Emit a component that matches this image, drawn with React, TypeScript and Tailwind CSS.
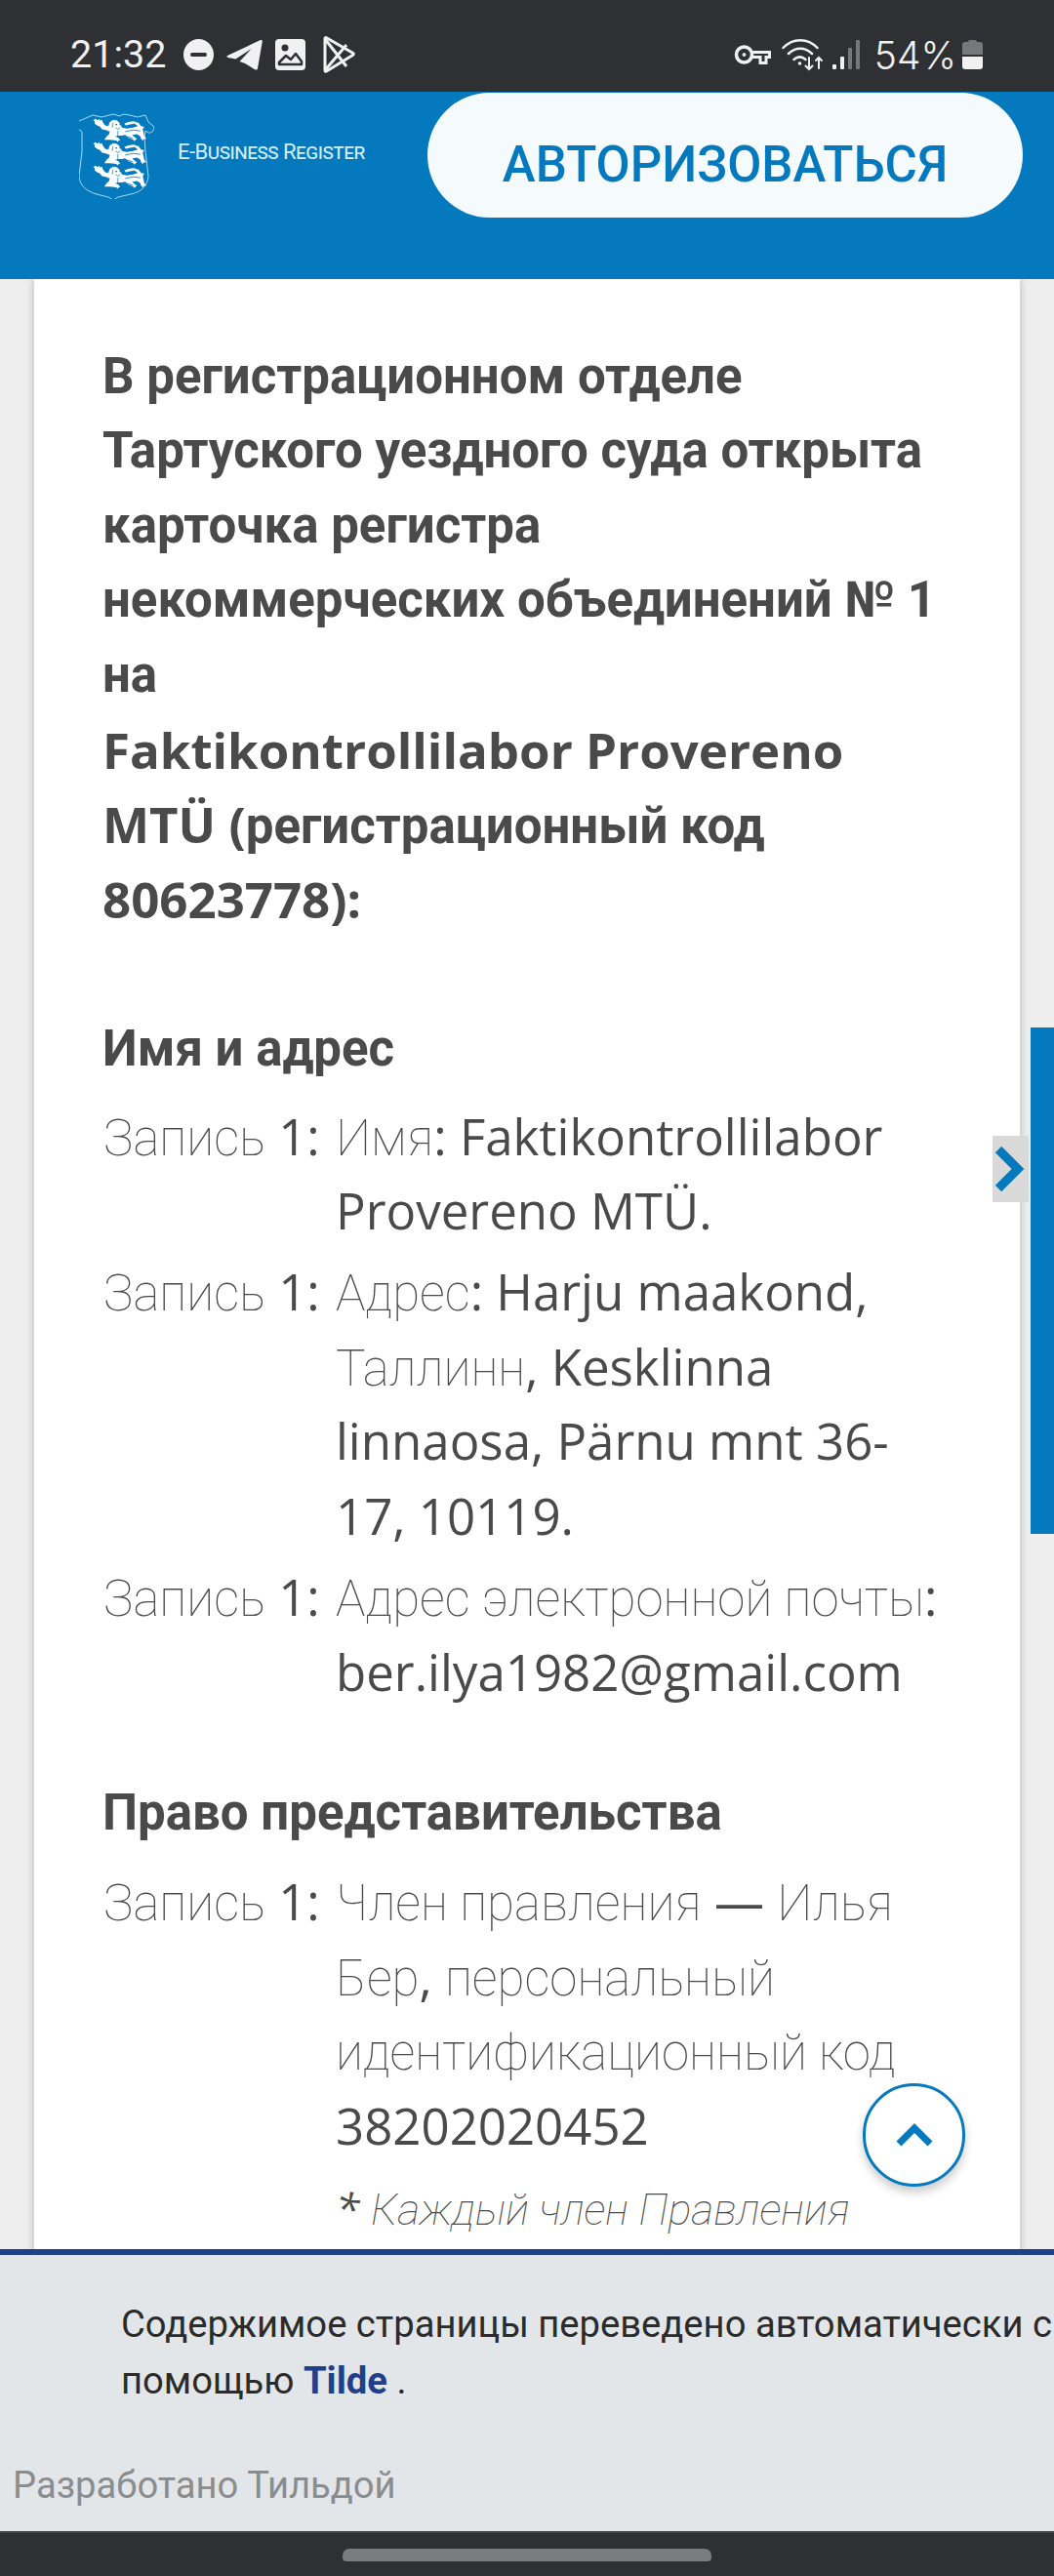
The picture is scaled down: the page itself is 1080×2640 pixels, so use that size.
const roboto = "font-['Roboto',sans-serif]";

function Lion() {
  return (
    <g>
      {/* body, legs and tail */}
      <path
        fill="#fff"
        d="M1 1l3 2 1-2 2 2 2-1 1 3 3 4 4 1 2-5 4-3 5 1 3 3 2 3 1 3 6 1 8-1 6-2-4-3-6 1-5 1-2-2 5-2 7-1 6 2 3 4 4 1-2 3 1 4 1 5 3 3-3 0-2 2-2-2-1-3-4-3-6 1 3 3 3 2-2 1-1 2-2-2-5-2-5-4-4 1-5 0-3 1 4 2 2 3-2 0-1 2-2-2-8-1-5 0-2 0 3-4 3-3 1-3-5-2-5-1-2-3-4-2-3-2 0-3-2-1z"
      />
      {/* face and mane detail */}
      <circle cx="27" cy="8" r="1.1" fill="#0479bd" />
      <circle cx="32" cy="8" r="1.1" fill="#0479bd" />
      <path d="M26 12l3 2 3-2M23 6l-1 6M36 6l1 6M29 16v6" stroke="#0479bd" strokeWidth="0.9" fill="none" />
      <path d="M38 17l10-2 9 1M41 23l7 3" stroke="#0479bd" strokeWidth="1" fill="none" />
    </g>
  );
}

function Coat() {
  return (
    <svg viewBox="0 0 82 90" className="h-[90px] w-[82px] shrink-0">
      <path
        d="M14 4l9 2 8-2 5-1 5 2 5-2 6 1 8 2 8-2 3 7 5 4c2 3-1 8-5 7l-3-2-1 7 1 14 3 26c-1 10-8 16-18 18l-13 3-5 3-5-3-12-3c-10-3-17-8-18-18l3-26v-20l-2-2c-4 2-7-3-5-6l4-3z"
        fill="none"
        stroke="#a9d9ef"
        strokeWidth="1"
      />
      <g transform="translate(16 7) scale(0.82)"><Lion /></g>
      <g transform="translate(16 31) scale(0.82)"><Lion /></g>
      <g transform="translate(16 55) scale(0.82)"><Lion /></g>
    </svg>
  );
}

function LeftStatusIcons() {
  return (
    <div className="ml-[18px] flex items-center">
      {/* do not disturb */}
      <svg viewBox="0 0 31 32" className="h-[32px] w-[31px]">
        <ellipse cx="15.5" cy="16" rx="15.5" ry="16" fill="#f1f1f1" />
        <rect x="7" y="14" width="17" height="4" rx="2" fill="#2f3034" />
      </svg>
      {/* telegram */}
      <svg viewBox="0 0 37 32" className="ml-[13px] h-[32px] w-[37px]">
        <path
          fill="#f1f1f1"
          d="M1 17L35 1c1-.4 2 .3 1.800 1.400L32 30c-.2 1.500-1.500 2-2.800 1.200L19 25l-5.500-2 12-13-16 10.500L1.500 19C.5 18.600.2 17.500 1 17z"
        />
      </svg>
      {/* gallery */}
      <svg viewBox="0 0 31 32" className="ml-[13px] h-[32px] w-[31px]">
        <rect width="31" height="32" rx="4" fill="#f1f1f1" />
        <circle cx="10" cy="9" r="3.500" fill="#2f3034" />
        <path d="M4 24l7-7 5 4 5-6 6 8v3H4z" fill="none" stroke="#2f3034" strokeWidth="2.500" strokeLinejoin="round" />
      </svg>
      {/* play store */}
      <svg viewBox="0 0 33 38" className="ml-[18px] h-[38px] w-[33px]" fill="none" stroke="#f1f1f1" strokeWidth="3" strokeLinejoin="round">
        <path d="M2 2.500c0-1 .8-1.200 1.500-.8l27 15.500c1 .6 1 1.700 0 2.300l-27 16.500c-.8.500-1.500 0-1.500-.8z" />
        <path d="M2 3l22 28M2 35L24 9" />
      </svg>
    </div>
  );
}

function RightStatusIcons() {
  return (
    <div className="flex items-center">
      {/* vpn key */}
      <svg viewBox="0 0 38 22" className="h-[22px] w-[38px]" fill="none" stroke="#f1f1f1">
        <circle cx="10.500" cy="11" r="8" strokeWidth="3.500" />
        <circle cx="10.500" cy="11" r="1.500" fill="#f1f1f1" strokeWidth="1" />
        <path d="M19 8.500h17.500v5H33v6h-6v-6h-8" strokeWidth="3" />
      </svg>
      {/* wifi with data arrows */}
      <svg viewBox="0 0 43 34" className="ml-[11px] h-[34px] w-[43px]" fill="none" stroke="#f1f1f1" strokeWidth="2.500" strokeLinecap="round">
        <path d="M1.500 10c10-10.500 25-10.500 35 0M7 16c7-7 17-7 24 0M12.500 22c4-3.500 8-3.500 12 0" />
        <circle cx="18.500" cy="26" r="1.800" fill="#f1f1f1" stroke="none" />
        <path d="M28 20v12m-3.500-3.500l3.500 3.500 3.500-3.500M38 31V20m-3 3l3-3 3 3" strokeWidth="2" />
      </svg>
      {/* signal */}
      <svg viewBox="0 0 28 30" className="ml-[9px] h-[30px] w-[28px]">
        <rect x="0" y="25" width="4" height="5" rx="1" fill="#f1f1f1" />
        <rect x="8" y="17" width="4" height="13" rx="1" fill="#f1f1f1" />
        <rect x="16" y="8" width="4" height="22" rx="1" fill="#77787a" />
        <rect x="24" y="0" width="4" height="30" rx="1" fill="#77787a" />
      </svg>
      <span className="ml-[15px] text-[39px] leading-none font-light text-[#f1f1f1] font-['Inter',sans-serif]">54%</span>
      {/* battery */}
      <svg viewBox="0 0 21 30" className="ml-[6px] h-[30px] w-[21px]">
        <path d="M6 2c0-1 1-2 2-2h5c1 0 2 1 2 2h3c2 0 3 1 3 3v10H0V5c0-2 1-3 3-3z" fill="#77787a" />
        <path d="M0 17h21v10c0 2-1 3-3 3H3c-2 0-3-1-3-3z" fill="#f1f1f1" />
      </svg>
    </div>
  );
}

// Cyrillic in the light weight falls back to a hairline Roboto on the site
const Light = ({ children }: { children: React.ReactNode }) => (
  <span className={`leading-none font-thin text-[#4a4a4a] ${roboto}`}>{children}</span>
);

function Row({ children }: { children: React.ReactNode }) {
  return (
    <div className="flex">
      <div className="ml-[1px] w-[238px] shrink-0">
        <Light>Запись</Light> 1:
      </div>
      <div className="w-[622px]">{children}</div>
    </div>
  );
}

export default function App() {
  return (
    <div className="relative flex h-[2640px] w-[1080px] flex-col overflow-hidden bg-[#eeeeee]">
      {/* status bar */}
      <div className="flex h-[94px] shrink-0 items-center justify-between bg-[#2f3034] pt-[18px] pr-[73px] pl-[72px]">
        <div className="flex items-center">
          <span className={`text-[39.5px] leading-none font-normal text-[#f1f1f1] ${roboto}`}>21:32</span>
          <LeftStatusIcons />
        </div>
        <RightStatusIcons />
      </div>

      {/* header */}
      <header className="relative z-10 flex h-[192px] shrink-0 items-start bg-[#0479bd] pl-[81px]">
        <div className="mt-[20px] flex items-center">
          <Coat />
          <span className={`mb-[6px] ml-[19px] w-[193px] text-[22px] leading-none tracking-[-0.5px] whitespace-nowrap text-[#d4edf7] [font-variant:small-caps] ${roboto}`}>
            E-Business Register
          </span>
        </div>
        <button className={`mt-[1px] ml-[63px] h-[128px] w-[610px] rounded-[64px] bg-[#f5fafd] pt-[18px] text-[51px] leading-none font-medium text-[#0479bd] ${roboto}`}>
          АВТОРИЗОВАТЬСЯ
        </button>
      </header>

      {/* content */}
      <main className="min-h-0 flex-1 overflow-hidden px-[35px]">
        <div className="bg-white px-[70px] pt-[62px] text-[51px] leading-[76.4px] text-[#4a4a4a] shadow-[0_0_8px_rgba(0,0,0,0.25)] font-['Open_Sans',sans-serif]">
          <div className="w-[860px] font-bold">
            <div className={roboto}>
              В регистрационном отделе Тартуского уездного суда открыта карточка регистра некоммерческих объединений № 1 на
            </div>
            <div>
              Faktikontrollilabor Provereno MTÜ (<span className={`leading-none ${roboto}`}>регистрационный код</span>
              <br />
              80623778):
            </div>
          </div>

          <h2 className={`mt-[78px] mb-[12px] font-bold ${roboto}`}>Имя и адрес</h2>
          <div className="flex flex-col gap-[7px]">
            <Row>
              <Light>Имя</Light>: Faktikontrollilabor Provereno MTÜ.
            </Row>
            <Row>
              <Light>Адрес</Light>: Harju maakond, <Light>Таллинн</Light>, Kesklinna linnaosa, Pärnu mnt 36-17, 10119.
            </Row>
            <Row>
              <Light>Адрес электронной почты</Light>: ber.ilya1982@gmail.com
            </Row>
          </div>

          <h2 className={`mt-[69px] mb-[14px] font-bold ${roboto}`}>Право представительства</h2>
          <Row>
            <Light>Член правления</Light> — <Light>Илья Бер</Light>, <Light>персональный идентификационный код</Light> 38202020452
            <p className="mt-[9px] text-[44.5px] italic">
              * <Light>Каждый член Правления может представлять</Light>
            </p>
          </Row>
        </div>
      </main>

      {/* translation notice */}
      <footer className={`h-[289px] shrink-0 overflow-hidden border-t-[6px] border-[#213f8a] bg-[#e3e6e8] ${roboto}`}>
        <p className="mt-[43px] ml-[124px] w-[1200px] text-[38.2px] leading-[57.5px] text-[#2b2b2b]">
          Содержимое страницы переведено автоматически с
          <br />
          помощью <span className="font-bold text-[#213f8a]">Tilde</span> .
        </p>
        <p className="mt-[49px] ml-[13px] text-[38.2px] leading-[58px] text-[#8a8c8e]">Разработано Тильдой</p>
      </footer>

      {/* nav bar */}
      <div className="h-[46px] shrink-0 border-t-[2px] border-[#44464b] bg-[#2f3034] pt-[16px]">
        <div className="mx-auto h-[13px] w-[378px] rounded-t-[7px] rounded-b-[4px] bg-[#7b7c7e]" />
      </div>

      {/* side tab */}
      <div className="absolute top-[1053px] right-0 h-[519px] w-[24px] bg-[#0479bd]" />
      <div className="absolute top-[1164px] left-[1017px] flex h-[68px] w-[37px] items-center bg-[#d9d9d9] pl-[2px]">
        <svg viewBox="0 0 31 46" className="h-[46px] w-[31px]">
          <path d="M4 3l20 20L4 43" fill="none" stroke="#0479bd" strokeWidth="9" />
        </svg>
      </div>

      {/* back to top */}
      <div className="absolute top-[2135px] left-[884px] flex h-[106px] w-[105px] items-center justify-center rounded-full border-[3px] border-[#0479bd] bg-white shadow-[0_6px_10px_rgba(0,0,0,0.2)]">
        <svg viewBox="0 0 38 24" className="h-[24px] w-[38px]">
          <path d="M3 21L19 5l16 16" fill="none" stroke="#0479bd" strokeWidth="7" />
        </svg>
      </div>
    </div>
  );
}
